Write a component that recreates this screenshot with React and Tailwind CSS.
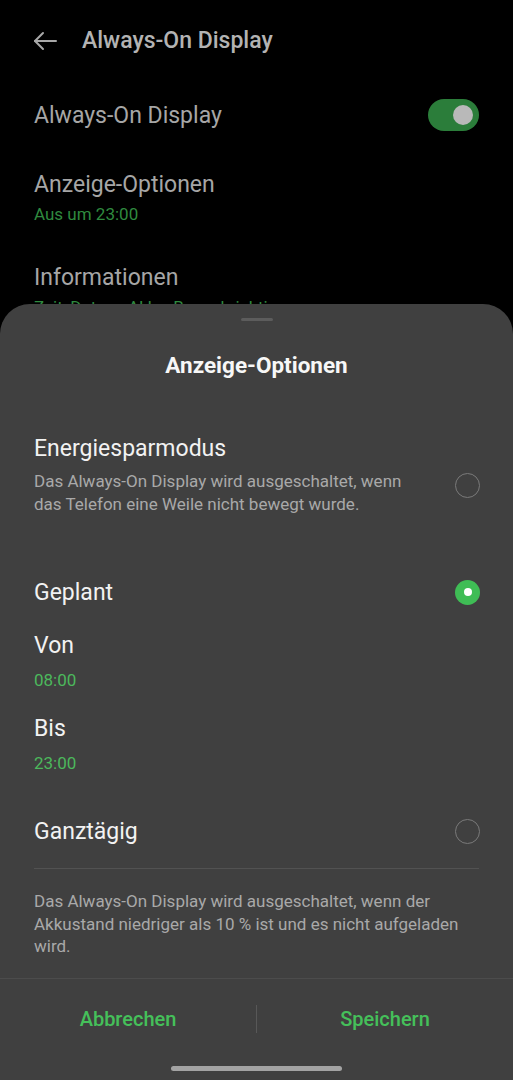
import React from 'react';

const font = { fontFamily: 'Roboto, "Noto Sans", sans-serif' };

function Radio({ checked }) {
  if (checked) {
    return (
      <div className="flex h-[25px] w-[25px] items-center justify-center rounded-full bg-[#3fbd55]">
        <div className="h-[8px] w-[8px] rounded-full bg-white" />
      </div>
    );
  }
  return <div className="h-[25px] w-[25px] rounded-full border-[1.5px] border-[#7a7a7a]" />;
}

export default function App() {
  return (
    <div className="relative h-[1080px] w-full overflow-hidden bg-black" style={font}>
      {/* hintergrund: einstellungsseite */}
      <div className="flex h-[82px] items-center pl-[32px]">
        <svg width="26" height="20" viewBox="0 0 26 20" fill="none" stroke="#a8a8a8" strokeWidth="2" strokeLinecap="round" strokeLinejoin="round">
          <path d="M24 10H3" />
          <path d="M11 2L3 10l8 8" />
        </svg>
        <span className="ml-[24px] text-[23px] font-medium text-[#b3b3b3]">Always-On Display</span>
      </div>
      <div className="flex h-[66px] items-center justify-between px-[34px]">
        <span className="mt-[2px] text-[23px] text-[#a6a6a6]">Always-On Display</span>
        <div className="flex h-[32px] w-[51px] items-center justify-end rounded-full bg-[#2b7d3a] pr-[6px]">
          <div className="h-[20px] w-[20px] rounded-full bg-[#b9b9b9]" />
        </div>
      </div>
      <div className="mt-[22px] px-[34px]">
        <div className="text-[23px] leading-[30px] text-[#a6a6a6]">Anzeige-Optionen</div>
        <div className="text-[17px] leading-[28px] text-[#2f8a3f]">Aus um 23:00</div>
      </div>
      <div className="mt-[35px] px-[34px]">
        <div className="text-[23px] leading-[30px] text-[#a6a6a6]">Informationen</div>
        <div className="text-[17px] leading-[28px] text-[#2f8a3f]">Zeit, Datum, Akku, Benachrichtigungen</div>
      </div>

      {/* bottom sheet */}
      <div className="absolute inset-x-0 bottom-0 top-[304px] flex flex-col rounded-t-[30px] bg-[#404040]">
        <div className="mx-auto mt-[14px] h-[3px] w-[32px] rounded-full bg-[#5c5c5c]" />
        <h2 className="mt-[29px] text-center text-[22.5px] font-bold leading-[30px] text-[#f7f7f7]">Anzeige-Optionen</h2>

        <div className="mt-[54px] flex items-start justify-between pl-[34px] pr-[33px]">
          <div>
            <div className="text-[23px] leading-[30px] text-[#f2f2f2]">Energiesparmodus</div>
            <div className="mt-[5.5px] w-[385px] text-[17px] leading-[23px] text-[#a9a9a9]">
              Das Always-On Display wird ausgeschaltet, wenn das Telefon eine Weile nicht bewegt wurde.
            </div>
          </div>
          <div className="mt-[39px]">
            <Radio />
          </div>
        </div>

        <div className="mt-[61.5px] flex h-[30px] items-center justify-between pl-[34px] pr-[33px]">
          <span className="mt-[2px] text-[23px] text-[#f2f2f2]">Geplant</span>
          <Radio checked />
        </div>
        <div className="mt-[24px] px-[34px]">
          <div className="text-[23px] leading-[30px] text-[#f2f2f2]">Von</div>
          <div className="mt-[7px] text-[17px] leading-[24px] text-[#4cb85c]">08:00</div>
        </div>
        <div className="mt-[22px] px-[34px]">
          <div className="text-[23px] leading-[30px] text-[#f2f2f2]">Bis</div>
          <div className="mt-[7px] text-[17px] leading-[24px] text-[#4cb85c]">23:00</div>
        </div>

        <div className="mt-[41px] flex h-[30px] items-center justify-between pl-[34px] pr-[33px]">
          <span className="mt-[2px] text-[23px] text-[#f2f2f2]">Ganztägig</span>
          <Radio />
        </div>
        <div className="mx-[34px] mt-[22px] h-px bg-[#525252]" />
        <div className="mt-[21px] px-[34px] text-[17px] leading-[22.5px] text-[#a9a9a9]">
          Das Always-On Display wird ausgeschaltet, wenn der Akkustand niedriger als 10 % ist und es nicht aufgeladen wird.
        </div>

        <div className="mt-[20px] h-px bg-[#4c4c4c]" />
        <div className="flex h-[80px] items-center">
          <button className="flex-1 text-[20px] font-medium text-[#45c05a]">Abbrechen</button>
          <div className="h-[28px] w-px bg-[#585858]" />
          <button className="flex-1 text-[20px] font-medium text-[#45c05a]">Speichern</button>
        </div>
        <div className="mx-auto mt-[7.5px] h-[5px] w-[171px] rounded-full bg-[#a3a3a3]" />
      </div>
    </div>
  );
}
